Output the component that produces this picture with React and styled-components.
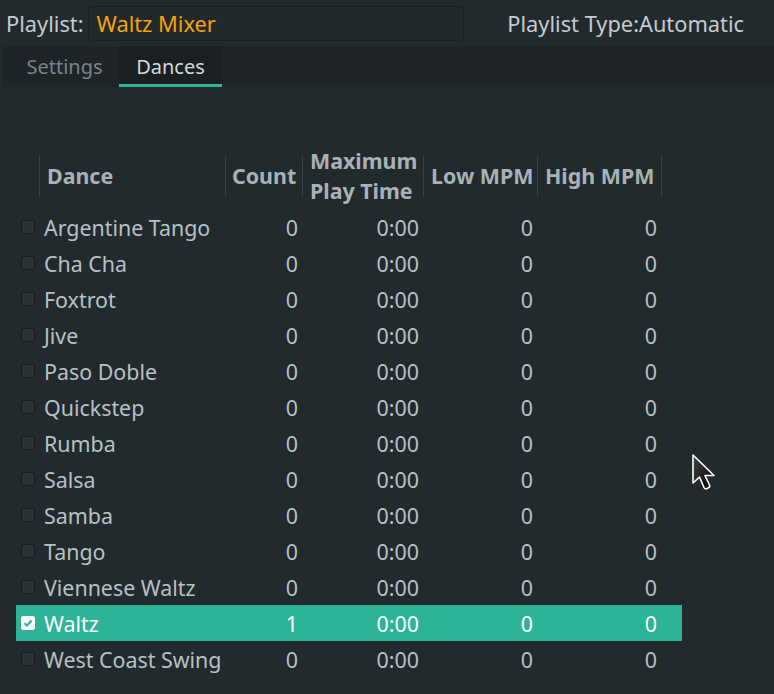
import React from "react";
import styled, { createGlobalStyle } from "styled-components";

const GlobalStyle = createGlobalStyle`
  html, body {
    margin: 0;
    padding: 0;
    background: #232a2e;
    font-family: "Noto Sans", "DejaVu Sans", sans-serif;
    font-size: 20px;
  }
`;

const Page = styled.div`
  position: relative;
  width: 774px;
  height: 694px;
  overflow: hidden;
  background: #232a2e;
  display: flex;
  flex-direction: column;
`;

const TopBar = styled.div`
  height: 46px;
  display: flex;
  align-items: center;
  padding: 0 30px 0 6px;
  color: #c3cbce;
  font-size: 21.8px;
`;

const Label = styled.span`
  margin-right: 4px;
`;

const NameBox = styled.div`
  width: 376px;
  height: 35px;
  box-sizing: border-box;
  display: flex;
  align-items: center;
  padding-left: 8px;
  border: 1px solid #1a1f22;
  border-radius: 3px;
  background: #22292c;
  color: #f4a30c;
`;

const TypeLabel = styled.span`
  margin-left: auto;
`;

const TabBar = styled.div`
  margin-left: 3px;
  height: 41px;
  display: flex;
  padding-left: 7px;
  background: #1e2427;
  border-top-left-radius: 3px;
`;

const Tab = styled.div`
  width: ${(p) => p.$w}px;
  box-sizing: border-box;
  display: flex;
  align-items: center;
  justify-content: center;
  color: ${(p) => (p.$active ? "#d2d9db" : "#7a8487")};
  background: ${(p) => (p.$active ? "#1a1f21" : "transparent")};
  border-bottom: 3px solid ${(p) => (p.$active ? "#2fb39b" : "transparent")};
  padding-top: 2px;
`;

const Panel = styled.div`
  flex: 1;
  margin-left: 3px;
  background: #232a2e;
  padding: 58px 0 0 13px;
  font-size: 21.4px;
`;

const cols = "24px 186px 77px 121px 114px 124px 20px";

const HeaderRow = styled.div`
  display: grid;
  grid-template-columns: ${cols};
  width: 666px;
  height: 64px;
  box-sizing: border-box;
  padding-top: 11px;
  align-items: start;
`;

const HeadCell = styled.div`
  height: 40px;
  box-sizing: border-box;
  display: flex;
  align-items: center;
  padding-left: ${(p) => p.$pad ?? 6}px;
  border-right: ${(p) => (p.$noLine ? "none" : "1px solid #3a4245")};
  color: #a8b2b4;
  font-weight: 700;
  line-height: 30px;
  white-space: nowrap;
`;

const Row = styled.div`
  display: grid;
  grid-template-columns: ${cols};
  width: 666px;
  height: 36px;
  align-items: center;
  background: ${(p) => (p.$selected ? "#2db398" : "transparent")};
  color: ${(p) => (p.$selected ? "#fbfdfd" : "#b6c1c4")};
`;

const CheckCell = styled.div`
  display: flex;
  align-items: center;
  padding-left: 5px;
`;

const Box = styled.div`
  width: 14px;
  height: 14px;
  box-sizing: border-box;
  border-radius: 2px;
  border: 1px solid ${(p) => (p.$checked ? "#fcfcfc" : "#181c1e")};
  background: ${(p) => (p.$checked ? "#fcfcfc" : "#2a3236")};
  display: flex;
  align-items: center;
  justify-content: center;
`;

const NameCell = styled.div`
  padding-left: 4px;
  white-space: nowrap;
`;

const NumCell = styled.div`
  text-align: right;
  padding-right: 5px;
`;

const Cursor = styled.svg`
  position: absolute;
  left: 691px;
  top: 453px;
`;

const dances = [
  "Argentine Tango",
  "Cha Cha",
  "Foxtrot",
  "Jive",
  "Paso Doble",
  "Quickstep",
  "Rumba",
  "Salsa",
  "Samba",
  "Tango",
  "Viennese Waltz",
  "Waltz",
  "West Coast Swing",
];

export default function App() {
  return (
    <Page>
      <GlobalStyle />
      <TopBar>
        <Label>Playlist:</Label>
        <NameBox>Waltz Mixer</NameBox>
        <TypeLabel>Playlist Type:Automatic</TypeLabel>
      </TopBar>
      <TabBar>
        <Tab $w={109}>Settings</Tab>
        <Tab $w={103} $active>
          Dances
        </Tab>
      </TabBar>
      <Panel>
        <HeaderRow>
          <HeadCell />
          <HeadCell $pad={7}>Dance</HeadCell>
          <HeadCell>Count</HeadCell>
          <HeadCell $pad={7}>
            Maximum
            <br />
            Play Time
          </HeadCell>
          <HeadCell $pad={7}>Low MPM</HeadCell>
          <HeadCell $pad={7}>High MPM</HeadCell>
          <HeadCell $noLine />
        </HeaderRow>
        {dances.map((d) => {
          const sel = d === "Waltz";
          return (
            <Row key={d} $selected={sel}>
              <CheckCell>
                <Box $checked={sel}>
                  {sel && (
                    <svg width="10" height="10" viewBox="0 0 10 10">
                      <path
                        d="M1.5 5.2 L4 7.5 L8.5 2.5"
                        fill="none"
                        stroke="#2db398"
                        strokeWidth="2"
                      />
                    </svg>
                  )}
                </Box>
              </CheckCell>
              <NameCell>{d}</NameCell>
              <NumCell>{sel ? 1 : 0}</NumCell>
              <NumCell>0:00</NumCell>
              <NumCell>0</NumCell>
              <NumCell>0</NumCell>
              <div />
            </Row>
          );
        })}
      </Panel>
      <Cursor width="28" height="42" viewBox="0 0 28 42">
        <defs>
          <linearGradient id="cg" x1="0" y1="0" x2="1" y2="1">
            <stop offset="0" stopColor="#444" />
            <stop offset="1" stopColor="#000" />
          </linearGradient>
        </defs>
        <path
          d="M2 2 L2 30 L8.5 24 L13 34.5 Q14 36.5 16 35.5 L17.5 34.8 Q19.3 33.8 18.5 32 L14 22.5 L23 22.5 Z"
          fill="url(#cg)"
          stroke="#fff"
          strokeWidth="1.6"
          strokeLinejoin="round"
        />
      </Cursor>
    </Page>
  );
}
